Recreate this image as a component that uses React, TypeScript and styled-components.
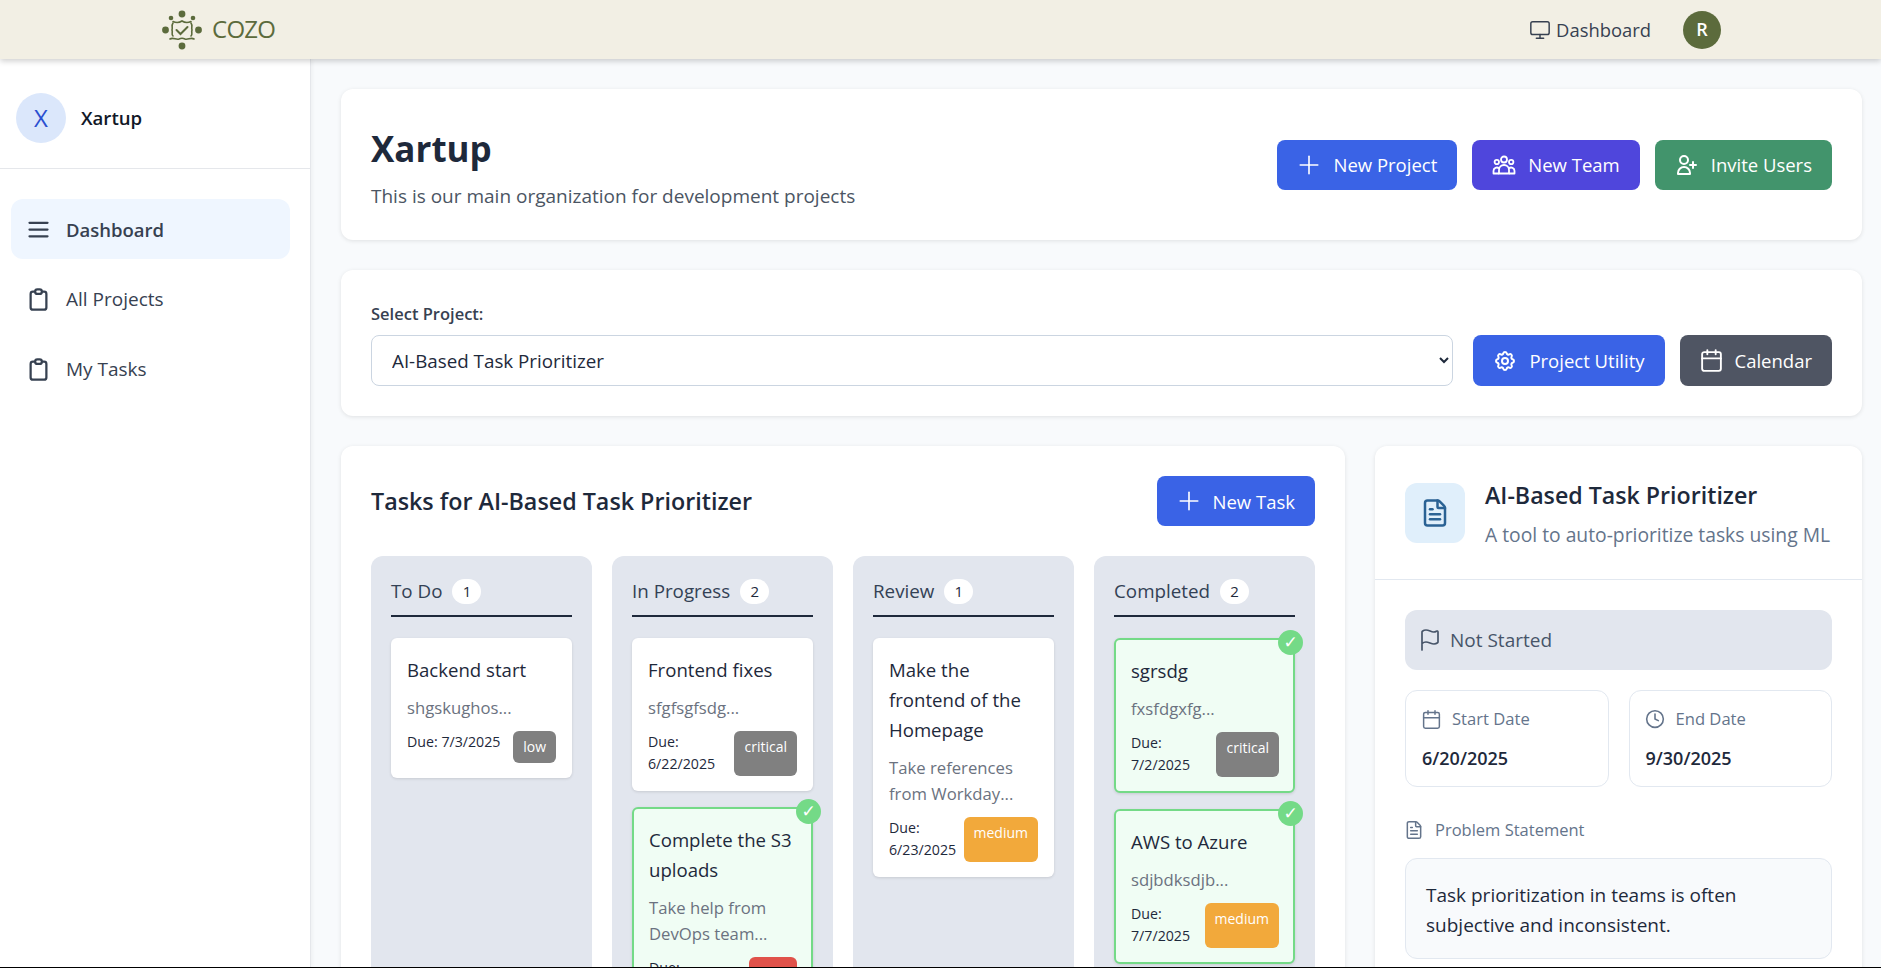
import React from 'react'
import styled, { createGlobalStyle } from 'styled-components'
import { HiOutlineClipboard, HiOutlineCog, HiOutlineMenu, HiOutlineUserAdd } from 'react-icons/hi'
import { Calendar, Clock, FileText, Flag, Monitor, Plus } from 'lucide-react'

const GlobalStyle = createGlobalStyle`
  * { box-sizing: border-box; }
  html, body { margin: 0; padding: 0; height: 100%; overflow: hidden; }
  body {
    font-family: 'Open Sans', 'Noto Sans', sans-serif;
    line-height: 1.6;
    color: #1e293b;
    background: #f8fafc;
  }
`

const Page = styled.div`
  height: 968px;
  border-bottom: 1px solid #000;
  overflow: hidden;
  display: flex;
  flex-direction: column;
`

const NavBar = styled.header`
  height: 59px;
  flex-shrink: 0;
  background: #f2efe4;
  box-shadow: 0 2px 6px rgba(0, 0, 0, 0.2);
  display: flex;
  align-items: center;
  justify-content: space-between;
  padding: 0 160px 0 162px;
  position: relative;
  z-index: 2;
`

const Brand = styled.div`
  display: flex;
  align-items: center;
  gap: 10px;
  font-size: 24px;
  font-weight: 500;
  letter-spacing: -0.03em;
  color: #5c6b3c;
`

const NavRight = styled.div`
  display: flex;
  align-items: center;
  gap: 32px;
`

const NavLink = styled.div`
  display: flex;
  align-items: center;
  gap: 5px;
  font-size: 18.4px;
  color: #374151;
`

const UserAvatar = styled.div`
  width: 38px;
  height: 38px;
  border-radius: 50%;
  background: #5c6b3c;
  color: #fff;
  font-weight: 600;
  font-size: 18px;
  display: flex;
  align-items: center;
  justify-content: center;
`

const Body = styled.div`
  flex: 1;
  display: flex;
  min-height: 0;
`

const Sidebar = styled.aside`
  width: 311px;
  flex-shrink: 0;
  background: #fff;
  border-right: 1px solid #e5e7eb;
  box-shadow: 1px 0 4px rgba(0, 0, 0, 0.05);
`

const OrgHeader = styled.div`
  display: flex;
  align-items: center;
  gap: 15px;
  height: 110px;
  padding: 9px 16px 0;
  border-bottom: 1px solid #e5e7eb;
`

const OrgAvatar = styled.div`
  width: 50px;
  height: 50px;
  border-radius: 50%;
  background: #dbe7fb;
  color: #2a4fd0;
  font-size: 24px;
  display: flex;
  align-items: center;
  justify-content: center;
`

const OrgName = styled.div`
  font-size: 18.6px;
  font-weight: 600;
  color: #111827;
`

const NavList = styled.nav`
  display: flex;
  flex-direction: column;
  gap: 10px;
  padding: 30px 20px 0 11px;
`

const NavItem = styled.div<{ $active?: boolean }>`
  height: 60px;
  display: flex;
  align-items: center;
  gap: 14px;
  padding: 1px 14px 0;
  border-radius: 12px;
  font-size: ${(p) => (p.$active ? 18.5 : 19)}px;
  color: #374151;
  font-weight: ${(p) => (p.$active ? 600 : 400)};
  background: ${(p) => (p.$active ? '#eff6ff' : 'transparent')};
`

const Main = styled.main`
  flex: 1;
  min-width: 0;
  display: flex;
  flex-direction: column;
  gap: 30px;
  padding: 30px 19px 0 30px;
`

const Card = styled.section`
  flex-shrink: 0;
  background: #fff;
  border-radius: 12px;
  box-shadow: 0 1px 4px rgba(0, 0, 0, 0.1);
`

const HeaderCard = styled(Card)`
  height: 151px;
  padding: 0 30px;
  display: flex;
  align-items: center;
  justify-content: space-between;
`

const OrgTitle = styled.h1`
  margin: 0;
  font-size: 35px;
  line-height: 60px;
  font-weight: 700;
  color: #1e293b;
`

const OrgDescription = styled.p`
  margin: 2px 0 0;
  font-size: 19px;
  line-height: 30px;
  color: #4b5563;
`

const ButtonRow = styled.div`
  display: flex;
  gap: 15px;
  height: 50px;
`

const ToolRow = styled(ButtonRow)`
  height: 51px;
`

const ActionButton = styled.button<{ $bg: string }>`
  height: 100%;
  display: inline-flex;
  align-items: center;
  gap: 12px;
  padding: 0 20px;
  border: none;
  border-radius: 8px;
  background: ${(p) => p.$bg};
  color: #fff;
  font-family: inherit;
  font-size: 18.5px;
  flex-shrink: 0;
`

const WidePlus = styled(Plus)`
  margin: 0 -3px;
`

const ButtonCalendar = styled(Calendar)`
  margin: 0 -1px;
`

const LabelCalendar = styled(Calendar)`
  margin: 0 -1.5px;
`

const LabelClock = styled(Clock)`
  margin: 0 -1px;
`

const StatusFlag = styled(Flag)`
  margin: 0 -3px;
`

const LabelDoc = styled(FileText)`
  margin: 0 -1px;
`

const SelectCard = styled(Card)`
  height: 146px;
  padding: 0 30px 30px;
  display: flex;
  align-items: flex-end;
  gap: 20px;
`

const SelectField = styled.div`
  flex: 1;
  min-width: 0;
`

const SelectLabel = styled.label`
  display: block;
  margin-bottom: 8px;
  font-size: 16.5px;
  line-height: 26px;
  font-weight: 600;
  color: #374151;
`

const ProjectSelect = styled.select`
  display: block;
  width: 100%;
  height: 51px;
  padding: 0 16px;
  border: 1px solid #cbd5e1;
  border-radius: 8px;
  background: #fff;
  color: #1e293b;
  font-family: inherit;
  font-size: 18.8px;
`

const ContentRow = styled.div`
  display: grid;
  grid-template-columns: 1004px 487px;
  gap: 30px;
`

const TasksCard = styled(Card)`
  padding: 30px;
  height: 700px;
`

const TasksHeader = styled.div`
  display: flex;
  align-items: center;
  justify-content: space-between;
  height: 50px;
  margin-bottom: 30px;
`

const TasksTitle = styled.h2`
  margin: 0;
  padding-top: 2px;
  font-size: 23.3px;
  font-weight: 600;
  color: #1e293b;
`

const Board = styled.div`
  display: grid;
  grid-template-columns: repeat(4, 221px);
  justify-content: space-between;
`

const Column = styled.div`
  background: #e2e6ee;
  border-radius: 12px;
  padding: 20px;
  height: 600px;
`

const ColumnHeader = styled.div`
  display: flex;
  align-items: center;
  gap: 10px;
  height: 41px;
  padding-bottom: 9px;
  border-bottom: 2px solid #1e293b;
  margin-bottom: 21px;
  font-size: 18.8px;
  color: #334155;
`

const CountBadge = styled.span`
  min-width: 29px;
  height: 25px;
  padding: 0 10px;
  border-radius: 13px;
  background: #fff;
  color: #1e293b;
  font-size: 15px;
  display: flex;
  align-items: center;
  justify-content: center;
`

const TaskList = styled.div`
  display: flex;
  flex-direction: column;
  gap: 16px;
`

const TaskCard = styled.div<{ $done?: boolean }>`
  position: relative;
  padding: ${(p) => (p.$done ? '16px 14px 14px 15px' : '17px 16px 15px 16px')};
  border-radius: 6px;
  border: ${(p) => (p.$done ? '2px solid #74da87' : 'none')};
  background: ${(p) => (p.$done ? '#f0fdf4' : '#fff')};
  box-shadow: 0 1px 3px rgba(0, 0, 0, 0.12);
`

const DoneMark = styled.span`
  position: absolute;
  top: -10px;
  right: -10px;
  width: 25px;
  height: 25px;
  border-radius: 50%;
  background: #74da87;
  color: #fff;
  font-family: 'DejaVu Sans', sans-serif;
  font-size: 17px;
  display: flex;
  align-items: center;
  justify-content: center;
`

const TaskTitle = styled.div`
  font-size: 18.6px;
  line-height: 30px;
  color: #1e293b;
`

const TaskDescription = styled.div`
  margin-top: 10px;
  font-size: 16.7px;
  line-height: 26px;
  color: #6b7280;
`

const TaskFooter = styled.div`
  display: flex;
  justify-content: space-between;
  margin-top: 10px;
`

const DueDate = styled.div`
  font-size: 14.2px;
  line-height: 22.4px;
  color: #1e293b;
`

const PriorityBadge = styled.span<{ $bg: string }>`
  flex-shrink: 0;
  padding: 5px 10px;
  border-radius: 6px;
  background: ${(p) => p.$bg};
  color: #fff;
  font-size: 14px;
  line-height: 22px;
`

const DetailCard = styled(Card)`
  height: 700px;
`

const DetailHeader = styled.div`
  display: flex;
  gap: 20px;
  height: 134px;
  padding: 30px 30px 0;
  border-bottom: 1px solid #e2e8f0;
`

const DetailIcon = styled.div`
  width: 60px;
  height: 60px;
  margin-top: 7px;
  border-radius: 12px;
  background: #e0effb;
  color: #2a6294;
  display: flex;
  align-items: center;
  justify-content: center;
  flex-shrink: 0;
`

const DetailTitle = styled.div`
  font-size: 23.2px;
  line-height: 39px;
  font-weight: 600;
  color: #1e293b;
`

const DetailSubtitle = styled.div`
  font-size: 19.3px;
  line-height: 40px;
  color: #64748b;
  white-space: nowrap;
`

const DetailBody = styled.div`
  display: flex;
  flex-direction: column;
  padding: 30px 30px 0;
`

const StatusBar = styled.div`
  height: 60px;
  display: flex;
  align-items: center;
  gap: 11px;
  padding: 0 16px;
  border-radius: 12px;
  background: #e2e6ee;
  color: #475569;
  font-size: 19px;
`

const DateGrid = styled.div`
  display: grid;
  grid-template-columns: 1fr 1fr;
  gap: 20px;
  margin-top: 20px;
`

const DateBox = styled.div`
  height: 97px;
  padding: 15px 16px;
  border: 1px solid #e2e8f0;
  border-radius: 12px;
`

const DateLabel = styled.div`
  display: flex;
  align-items: center;
  gap: 12px;
  font-size: 16.6px;
  line-height: 26px;
  color: #64748b;
`

const DateValue = styled.div`
  margin-top: 13px;
  font-size: 18px;
  line-height: 26px;
  font-weight: 600;
  color: #1e293b;
`

const SectionLabel = styled.div`
  display: flex;
  align-items: center;
  gap: 12px;
  margin-top: 30px;
  font-size: 16.5px;
  line-height: 26px;
  color: #64748b;
`

const ProblemBox = styled.div`
  margin-top: 15px;
  height: 101px;
  padding: 21px 20px;
  border: 1px solid #e2e8f0;
  border-radius: 12px;
  background: #f8fafc;
  font-size: 19px;
  line-height: 30px;
  color: #1e293b;
`

// drawn by hand, the packages have nothing like the logo
const Logo = () => (
  <svg width="40" height="40" viewBox="0 0 40 40" fill="none" stroke="#5c6b3c" strokeWidth="1.6" strokeLinecap="round">
    <g fill="#5c6b3c" stroke="none">
      <circle cx="20" cy="4" r="3.4" />
      <circle cx="20" cy="36" r="3.4" />
      <circle cx="3.5" cy="20" r="3.4" />
      <circle cx="36.5" cy="20" r="3.4" />
      <circle cx="9" cy="8" r="2.3" />
      <circle cx="31" cy="8" r="2.3" />
    </g>
    <path d="M11 11.5c3 1.5 6 1.5 9-.5c3 2 6 2 9 .5" />
    <path d="M8 29c3-2 6 1 9 0c2-1 4-1 6 0c3 1 6-2 9 0" />
    <path d="M11 13c-2 3 0 4-1 7c1 3-1 4 1 6" />
    <path d="M29 13c2 3 0 4 1 7c-1 3 1 4-1 6" />
    <path d="M14.5 20l4 4l7-7" strokeWidth="2" />
  </svg>
)

// three heads with closed bodies, the packages draw this one differently
const TeamIcon = () => (
  <svg width="24" height="24" viewBox="0 0 24 24" fill="none" stroke="currentColor" strokeWidth="1.8" strokeLinejoin="round">
    <circle cx="12" cy="6.5" r="3" />
    <circle cx="4.8" cy="9" r="2.2" />
    <circle cx="19.2" cy="9" r="2.2" />
    <path d="M7 20.5v-3.5a5 5 0 0 1 10 0v3.5z" />
    <path d="M7 20.5H1.5v-2.5a3.3 3.3 0 0 1 5.6-2.5" />
    <path d="M17 20.5h5.5v-2.5a3.3 3.3 0 0 0-5.6-2.5" />
  </svg>
)

type Task = {
  title: string
  description: string
  due: string
  priority: string
  color: string
  done?: boolean
}

const GREY = '#808080'
const ORANGE = '#f2a93b'
const RED = '#e0524a'

const columns: { name: string; tasks: Task[] }[] = [
  {
    name: 'To Do',
    tasks: [{ title: 'Backend start', description: 'shgskughos...', due: '7/3/2025', priority: 'low', color: GREY }]
  },
  {
    name: 'In Progress',
    tasks: [
      { title: 'Frontend fixes', description: 'sfgfsgfsdg...', due: '6/22/2025', priority: 'critical', color: GREY },
      { title: 'Complete the S3 uploads', description: 'Take help from DevOps team...', due: '6/25/2025', priority: 'high', color: RED, done: true }
    ]
  },
  {
    name: 'Review',
    tasks: [{ title: 'Make the frontend of the Homepage', description: 'Take references from Workday...', due: '6/23/2025', priority: 'medium', color: ORANGE }]
  },
  {
    name: 'Completed',
    tasks: [
      { title: 'sgrsdg', description: 'fxsfdgxfg...', due: '7/2/2025', priority: 'critical', color: GREY, done: true },
      { title: 'AWS to Azure', description: 'sdjbdksdjb...', due: '7/7/2025', priority: 'medium', color: ORANGE, done: true }
    ]
  }
]

const App: React.FC = () => {
  return (
    <Page>
      <GlobalStyle />
      <NavBar>
        <Brand>
          <Logo />
          COZO
        </Brand>
        <NavRight>
          <NavLink>
            <Monitor size={22} strokeWidth={1.6} />
            Dashboard
          </NavLink>
          <UserAvatar>R</UserAvatar>
        </NavRight>
      </NavBar>
      <Body>
        <Sidebar>
          <OrgHeader>
            <OrgAvatar>X</OrgAvatar>
            <OrgName>Xartup</OrgName>
          </OrgHeader>
          <NavList>
            <NavItem $active>
              <HiOutlineMenu size={27} />
              Dashboard
            </NavItem>
            <NavItem>
              <HiOutlineClipboard size={27} />
              All Projects
            </NavItem>
            <NavItem>
              <HiOutlineClipboard size={27} />
              My Tasks
            </NavItem>
          </NavList>
        </Sidebar>
        <Main>
          <HeaderCard>
            <div>
              <OrgTitle>Xartup</OrgTitle>
              <OrgDescription>This is our main organization for development projects</OrgDescription>
            </div>
            <ButtonRow>
              <ActionButton $bg="#3a63e6">
                <WidePlus size={30} strokeWidth={1.3} />
                New Project
              </ActionButton>
              <ActionButton $bg="#4f46dc">
                <TeamIcon />
                New Team
              </ActionButton>
              <ActionButton $bg="#42946c">
                <HiOutlineUserAdd size={24} />
                Invite Users
              </ActionButton>
            </ButtonRow>
          </HeaderCard>
          <SelectCard>
            <SelectField>
              <SelectLabel>Select Project:</SelectLabel>
              <ProjectSelect defaultValue="AI-Based Task Prioritizer">
                <option>AI-Based Task Prioritizer</option>
              </ProjectSelect>
            </SelectField>
            <ToolRow>
              <ActionButton $bg="#3a63e6">
                <HiOutlineCog size={24} />
                Project Utility
              </ActionButton>
              <ActionButton $bg="#4f5563">
                <ButtonCalendar size={25} strokeWidth={1.8} />
                Calendar
              </ActionButton>
            </ToolRow>
          </SelectCard>
          <ContentRow>
            <TasksCard>
              <TasksHeader>
                <TasksTitle>Tasks for AI-Based Task Prioritizer</TasksTitle>
                <ActionButton $bg="#3a63e6">
                  <WidePlus size={30} strokeWidth={1.3} />
                  New Task
                </ActionButton>
              </TasksHeader>
              <Board>
                {columns.map((column) => (
                  <Column key={column.name}>
                    <ColumnHeader>
                      {column.name}
                      <CountBadge>{column.tasks.length}</CountBadge>
                    </ColumnHeader>
                    <TaskList>
                      {column.tasks.map((task) => (
                        <TaskCard key={task.title} $done={task.done}>
                          {task.done && <DoneMark>✓</DoneMark>}
                          <TaskTitle>{task.title}</TaskTitle>
                          <TaskDescription>{task.description}</TaskDescription>
                          <TaskFooter>
                            <DueDate>Due: {task.due}</DueDate>
                            <PriorityBadge $bg={task.color}>{task.priority}</PriorityBadge>
                          </TaskFooter>
                        </TaskCard>
                      ))}
                    </TaskList>
                  </Column>
                ))}
              </Board>
            </TasksCard>
            <DetailCard>
              <DetailHeader>
                <DetailIcon>
                  <FileText size={30} strokeWidth={2} />
                </DetailIcon>
                <div>
                  <DetailTitle>AI-Based Task Prioritizer</DetailTitle>
                  <DetailSubtitle>A tool to auto-prioritize tasks using ML</DetailSubtitle>
                </div>
              </DetailHeader>
              <DetailBody>
                <StatusBar>
                  <StatusFlag size={24} strokeWidth={1.7} />
                  Not Started
                </StatusBar>
                <DateGrid>
                  <DateBox>
                    <DateLabel>
                      <LabelCalendar size={21} strokeWidth={1.7} />
                      Start Date
                    </DateLabel>
                    <DateValue>6/20/2025</DateValue>
                  </DateBox>
                  <DateBox>
                    <DateLabel>
                      <LabelClock size={20} strokeWidth={1.9} />
                      End Date
                    </DateLabel>
                    <DateValue>9/30/2025</DateValue>
                  </DateBox>
                </DateGrid>
                <SectionLabel>
                  <LabelDoc size={20} strokeWidth={1.8} />
                  Problem Statement
                </SectionLabel>
                <ProblemBox>Task prioritization in teams is often subjective and inconsistent.</ProblemBox>
              </DetailBody>
            </DetailCard>
          </ContentRow>
        </Main>
      </Body>
    </Page>
  )
}

export default App
